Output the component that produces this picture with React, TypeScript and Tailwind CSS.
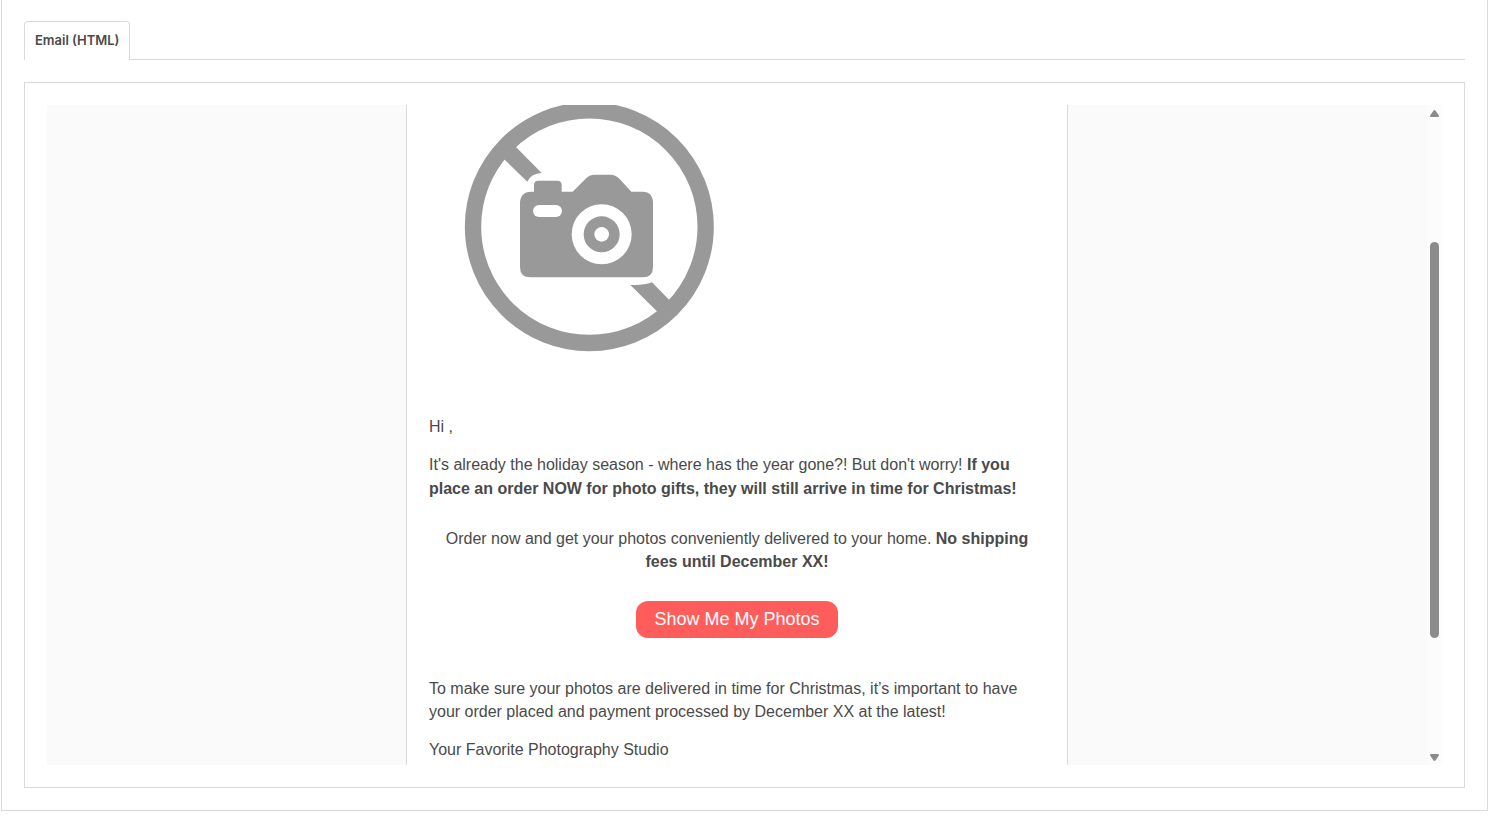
import type { ReactNode } from 'react';

interface ParagraphProps {
  children: ReactNode;
  className?: string;
}

function Paragraph({ children, className = '' }: ParagraphProps) {
  return <p className={`text-base ${className}`}>{children}</p>;
}

function NoPhotoImage() {
  return (
    <svg
      viewBox="-63 30 960 810"
      className="block w-[320px] h-[270px]"
      role="img"
      aria-label="No photo available"
    >
      <g fill="#999999">
        <circle cx="418" cy="395" r="349" fill="none" stroke="#999999" strokeWidth="49" />
        {/* slash, broken around the camera */}
        <path d="M135 165 L170 130 L200 158 L275 234 Q242 236 232 260 L164 194 Z" />
        <path d="M541 570 Q580 572 606 562 L657 614 L682 640 L648 676 L620 648 Z" />
        {/* camera body */}
        <path d="M210 325 Q210 291 244 290 L252 290 L252 270 Q252 257 265 257 L322 257 Q335 257 335 270 L335 290 L368 290 L407 251 Q418 239 434 239 L482 239 Q496 239 508 251 L544 290 L578 290 Q609 291 609 325 L609 516 Q609 547 578 547 L241 547 Q210 547 210 516 Z" />
      </g>
      <rect x="249" y="330" width="87" height="36" rx="18" fill="white" />
      <circle cx="455" cy="418" r="90" fill="white" />
      <circle cx="455" cy="418" r="54" fill="#999999" />
      <circle cx="455" cy="418" r="22" fill="white" />
    </svg>
  );
}

function ScrollTrack() {
  return (
    <div className="flex w-[15px] shrink-0 flex-col items-center bg-[#fcfcfc] pt-[5px] pb-1">
      <svg viewBox="0 0 9 7" className="h-[7px] w-[9px]" aria-hidden="true">
        <path d="M4.5 0 Q5 0 5.6 .8 L8.7 5.2 Q9.3 7 8 7 H1 Q-.3 7 .3 5.2 L3.4 .8 Q4 0 4.5 0Z" fill="#8b8b8b" />
      </svg>
      <div className="flex w-full flex-1 flex-col items-center pt-[125px]">
        <div className="h-[396px] w-[9px] rounded-full bg-[#8b8b8b]" />
      </div>
      <svg viewBox="0 0 9 7" className="h-[7px] w-[9px]" aria-hidden="true">
        <path d="M4.5 7 Q5 7 5.6 6.2 L8.7 1.8 Q9.3 0 8 0 H1 Q-.3 0 .3 1.8 L3.4 6.2 Q4 7 4.5 7Z" fill="#8b8b8b" />
      </svg>
    </div>
  );
}

function EmailPreview() {
  return (
    <div className="flex h-[660px] bg-[#fafafa]">
      <div className="flex min-w-0 flex-1 justify-center overflow-hidden">
        <div className="w-full max-w-[662px] border-x border-[#dadada] bg-white px-[22px] font-['Liberation_Sans',Arial,sans-serif] text-[#4a4a4a]">
          <NoPhotoImage />
          <div className="pt-10">
            <Paragraph className="leading-6">Hi ,</Paragraph>
            <Paragraph className="mt-3.5 leading-6">
              It's already the holiday season - where has the year gone?! But don't worry!{' '}
              <strong>
                If you place an order NOW for photo gifts, they will still arrive in time for Christmas!
              </strong>
            </Paragraph>
          </div>
          <Paragraph className="mt-[26px] text-center leading-[23px]">
            Order now and get your photos conveniently delivered to your home.{' '}
            <strong>No shipping fees until December XX!</strong>
          </Paragraph>
          <div className="mt-7 flex justify-center">
            <button
              type="button"
              className="rounded-xl bg-[#ff5c5c] px-[18px] py-[5px] text-lg leading-[27px] text-white"
            >
              Show Me My Photos
            </button>
          </div>
          <Paragraph className="mt-[39px] leading-[23px]">
            To make sure your photos are delivered in time for Christmas, it’s important to have your
            order placed and payment processed by December XX at the latest!
          </Paragraph>
          <Paragraph className="mt-[15px] leading-[23px]">Your Favorite Photography Studio</Paragraph>
        </div>
      </div>
      <ScrollTrack />
    </div>
  );
}

export default function App() {
  return (
    <main className="bg-white">
      <section className="mx-px border-x border-b border-[#dadada] px-[22px] pt-[21px] pb-[22px]">
        <div className="flex" role="tablist">
          <button
            type="button"
            role="tab"
            id="tab-html"
            aria-selected="true"
            aria-controls="panel-html"
            className="h-[39px] rounded-t border-x border-t border-[#dadada] px-[10px] font-['Inter',sans-serif] text-[13px] font-semibold text-[#4a4a4a]"
          >
            Email (HTML)
          </button>
          <div className="flex-1 border-b border-[#dadada]" />
        </div>
        <div
          role="tabpanel"
          id="panel-html"
          aria-labelledby="tab-html"
          className="mt-[22px] border border-[#dadada] p-[22px]"
        >
          <EmailPreview />
        </div>
      </section>
    </main>
  );
}
